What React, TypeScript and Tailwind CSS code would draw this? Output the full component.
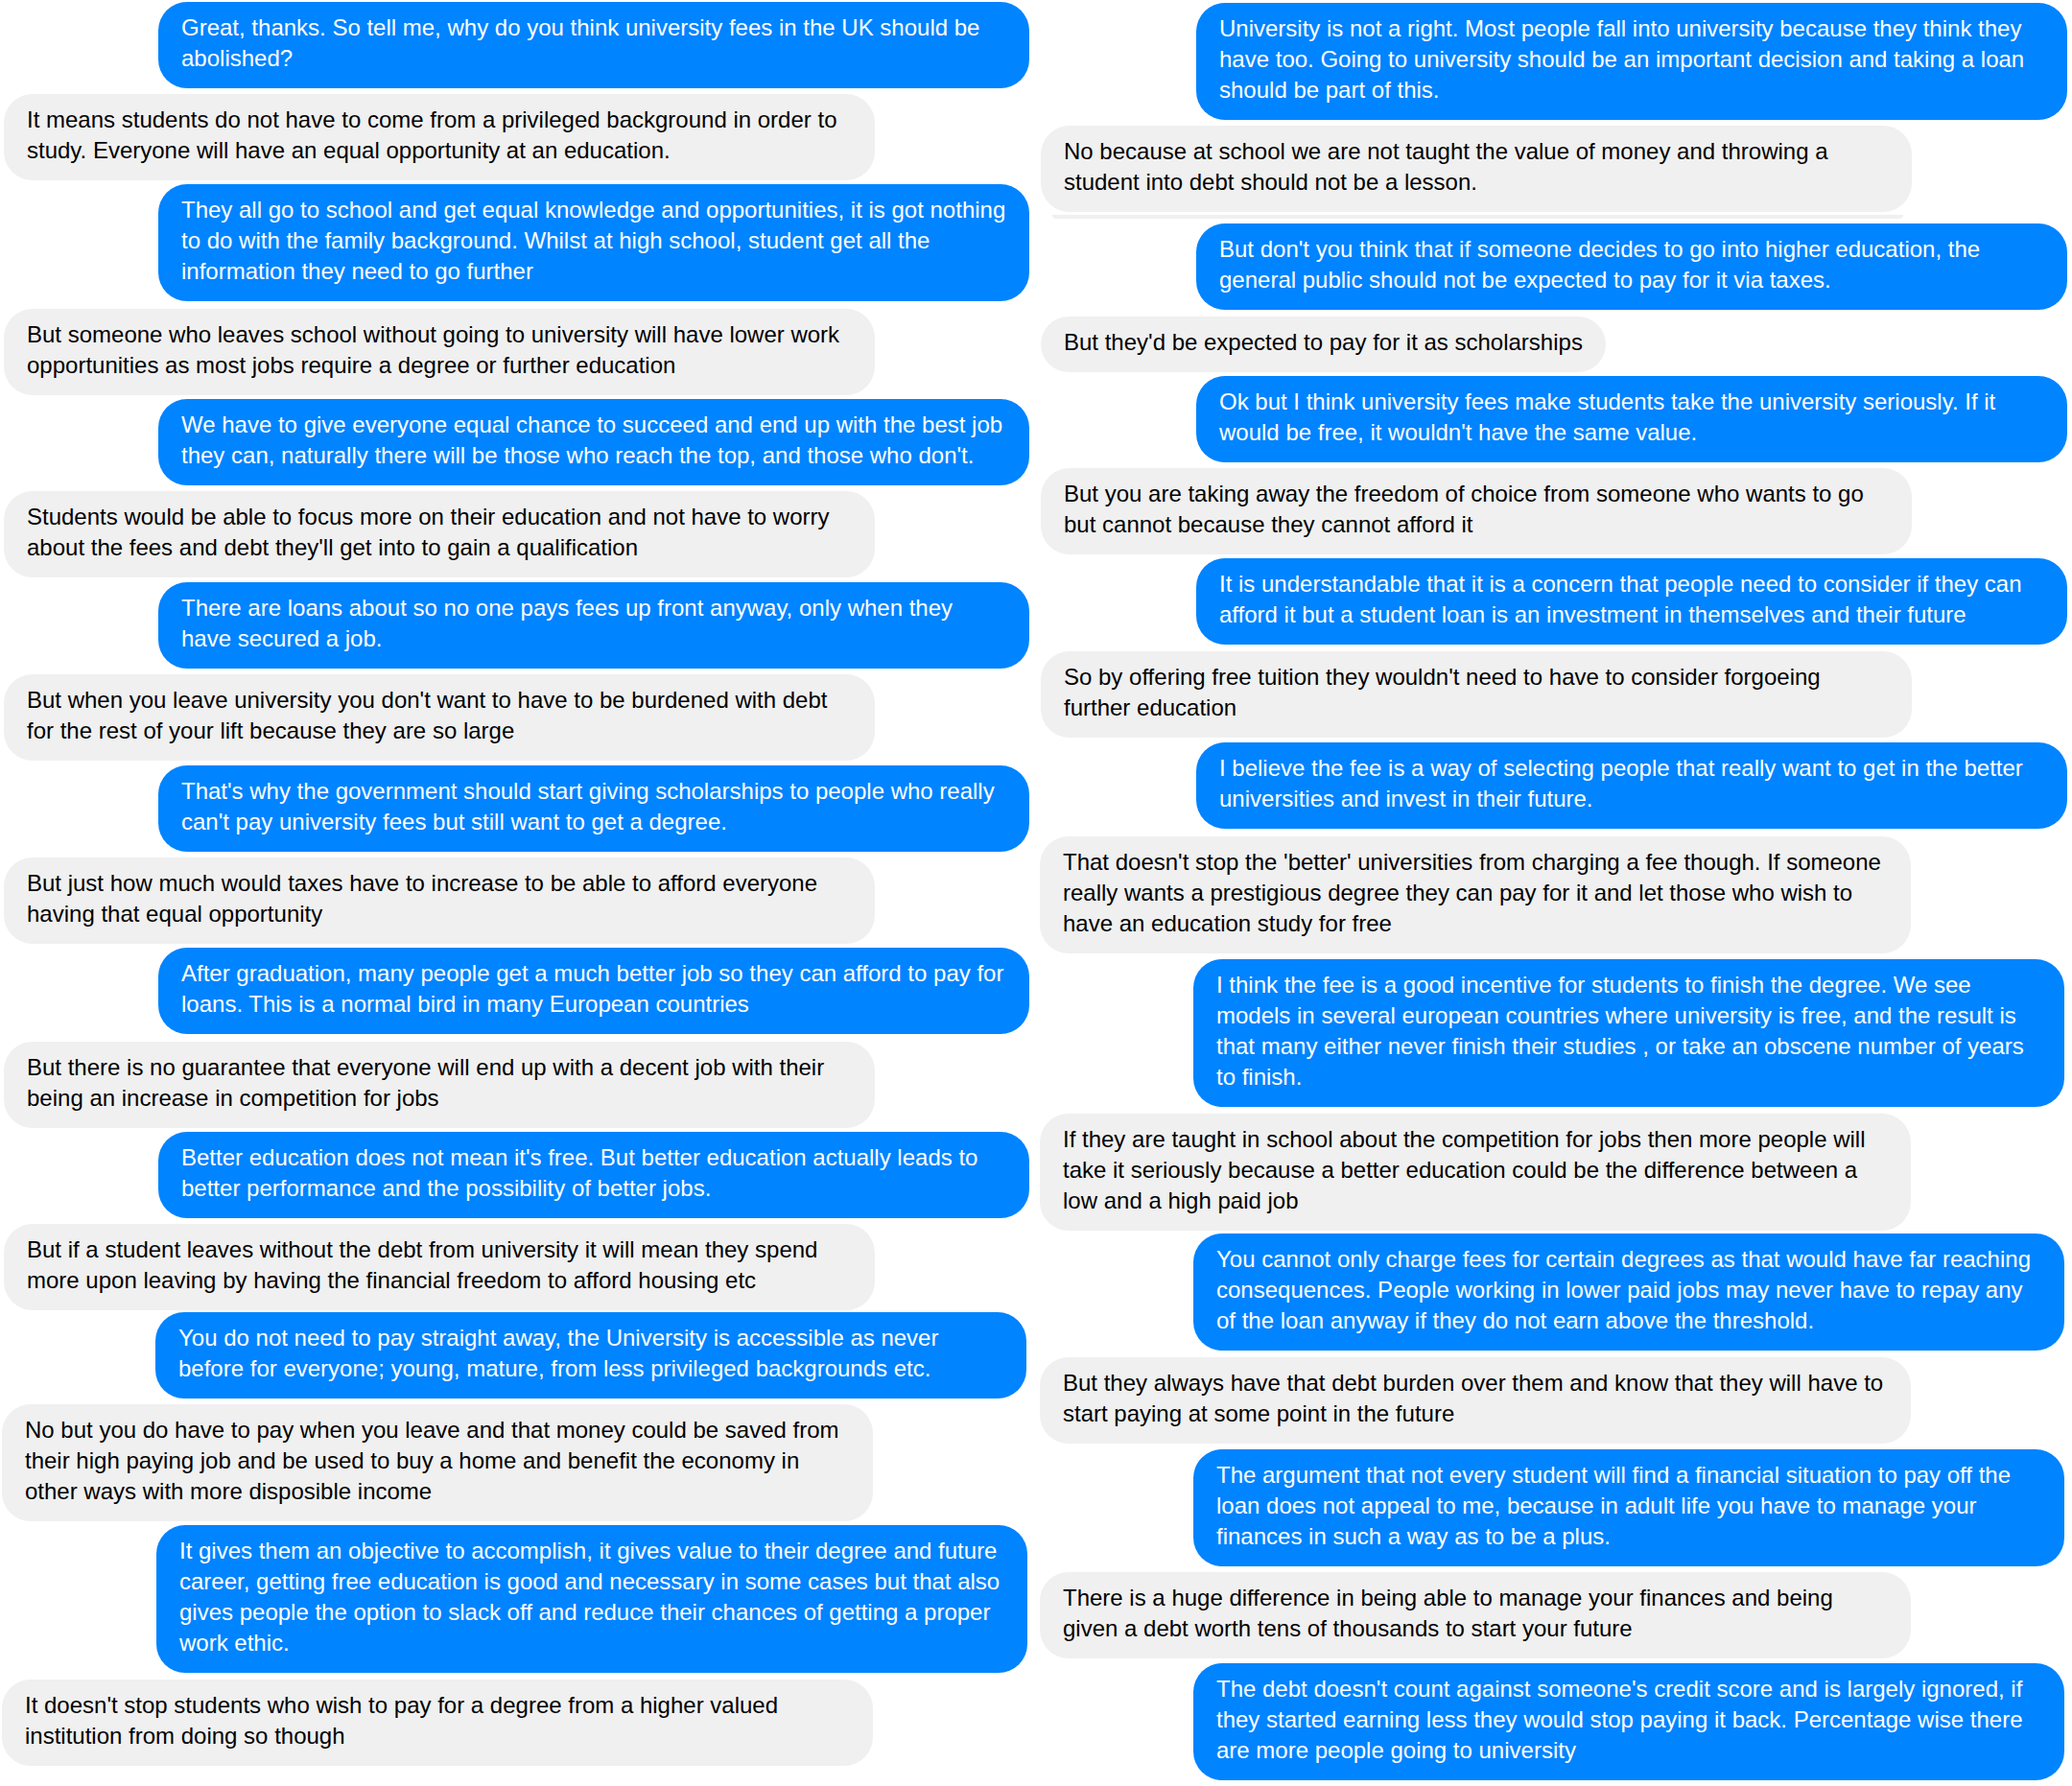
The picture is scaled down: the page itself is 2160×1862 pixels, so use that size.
import React from "react";

type Msg = { me: boolean; mt: string; lines: string[]; nudge?: string };

const leftThread: Msg[] = [
  { me: true, mt: "mt-[2px]", lines: ["Great, thanks. So tell me, why do you think university fees in the UK should be", "abolished?"] },
  { me: false, mt: "mt-[6px]", lines: ["It means students do not have to come from a privileged background in order to", "study. Everyone will have an equal opportunity at an education."] },
  { me: true, mt: "mt-[4px]", lines: ["They all go to school and get equal knowledge and opportunities, it is got nothing", "to do with the family background. Whilst at high school, student get all the", "information they need to go further"] },
  { me: false, mt: "mt-[8px]", lines: ["But someone who leaves school without going to university will have lower work", "opportunities as most jobs require a degree or further education"] },
  { me: true, mt: "mt-[4px]", lines: ["We have to give everyone equal chance to succeed and end up with the best job", "they can, naturally there will be those who reach the top, and those who don't."] },
  { me: false, mt: "mt-[6px]", lines: ["Students would be able to focus more on their education and not have to worry", "about the fees and debt they'll get into to gain a qualification"] },
  { me: true, mt: "mt-[5px]", lines: ["There are loans about so no one pays fees up front anyway, only when they", "have secured a job."] },
  { me: false, mt: "mt-[6px]", lines: ["But when you leave university you don't want to have to be burdened with debt", "for the rest of your lift because they are so large"] },
  { me: true, mt: "mt-[5px]", lines: ["That's why the government should start giving scholarships to people who really", "can't pay university fees but still want to get a degree."] },
  { me: false, mt: "mt-[6px]", lines: ["But just how much would taxes have to increase to be able to afford everyone", "having that equal opportunity"] },
  { me: true, mt: "mt-[4px]", lines: ["After graduation, many people get a much better job so they can afford to pay for", "loans. This is a normal bird in many European countries"] },
  { me: false, mt: "mt-[8px]", lines: ["But there is no guarantee that everyone will end up with a decent job with their", "being an increase in competition for jobs"] },
  { me: true, mt: "mt-[4px]", lines: ["Better education does not mean it's free. But better education actually leads to", "better performance and the possibility of better jobs."] },
  { me: false, mt: "mt-[6px]", lines: ["But if a student leaves without the debt from university it will mean they spend", "more upon leaving by having the financial freedom to afford housing etc"] },
  { me: true, mt: "mt-[2px]", nudge: "mr-[3px]", lines: ["You do not need to pay straight away, the University is accessible as never", "before for everyone; young, mature, from less privileged backgrounds etc."] },
  { me: false, mt: "mt-[6px]", nudge: "-ml-[2px]", lines: ["No but you do have to pay when you leave and that money could be saved from", "their high paying job and be used to buy a home and benefit the economy in", "other ways with more disposible income"] },
  { me: true, mt: "mt-[4px]", nudge: "mr-[2px]", lines: ["It gives them an objective to accomplish, it gives value to their degree and future", "career, getting free education is good and necessary in some cases but that also", "gives people the option to slack off and reduce their chances of getting a proper", "work ethic."] },
  { me: false, mt: "mt-[7px]", nudge: "-ml-[2px]", lines: ["It doesn't stop students who wish to pay for a degree from a higher valued", "institution from doing so though"] },
];

const rightTop: Msg[] = [
  { me: true, mt: "mt-[3px]", lines: ["University is not a right. Most people fall into university because they think they", "have too. Going to university should be an important decision and taking a loan", "should be part of this."] },
  { me: false, mt: "mt-[6px]", lines: ["No because at school we are not taught the value of money and throwing a", "student into debt should not be a lesson."] },
];

const rightRest: Msg[] = [
  { me: true, mt: "mt-[5px]", lines: ["But don't you think that if someone decides to go into higher education, the", "general public should not be expected to pay for it via taxes."] },
  { me: false, mt: "mt-[7px]", lines: ["But they'd be expected to pay for it as scholarships"] },
  { me: true, mt: "mt-[4px]", lines: ["Ok but I think university fees make students take the university seriously. If it", "would be free, it wouldn't have the same value."] },
  { me: false, mt: "mt-[6px]", lines: ["But you are taking away the freedom of choice from someone who wants to go", "but cannot because they cannot afford it"] },
  { me: true, mt: "mt-[4px]", lines: ["It is understandable that it is a concern that people need to consider if they can", "afford it but a student loan is an investment in themselves and their future"] },
  { me: false, mt: "mt-[7px]", lines: ["So by offering free tuition they wouldn't need to have to consider forgoeing", "further education"] },
  { me: true, mt: "mt-[5px]", lines: ["I believe the fee is a way of selecting people that really want to get in the better", "universities and invest in their future."] },
  { me: false, mt: "mt-[8px]", nudge: "-ml-[1px]", lines: ["That doesn't stop the 'better' universities from charging a fee though. If someone", "really wants a prestigious degree they can pay for it and let those who wish to", "have an education study for free"] },
  { me: true, mt: "mt-[6px]", nudge: "mr-[3px]", lines: ["I think the fee is a good incentive for students to finish the degree. We see", "models in several european countries where university is free, and the result is", "that many either never finish their studies , or take an obscene number of years", "to finish."] },
  { me: false, mt: "mt-[7px]", nudge: "-ml-[1px]", lines: ["If they are taught in school about the competition for jobs then more people will", "take it seriously because a better education could be the difference between a", "low and a high paid job"] },
  { me: true, mt: "mt-[3px]", nudge: "mr-[3px]", lines: ["You cannot only charge fees for certain degrees as that would have far reaching", "consequences. People working in lower paid jobs may never have to repay any", "of the loan anyway if they do not earn above the threshold."] },
  { me: false, mt: "mt-[7px]", nudge: "-ml-[1px]", lines: ["But they always have that debt burden over them and know that they will have to", "start paying at some point in the future"] },
  { me: true, mt: "mt-[6px]", nudge: "mr-[3px]", lines: ["The argument that not every student will find a financial situation to pay off the", "loan does not appeal to me, because in adult life you have to manage your", "finances in such a way as to be a plus."] },
  { me: false, mt: "mt-[6px]", nudge: "-ml-[1px]", lines: ["There is a huge difference in being able to manage your finances and being", "given a debt worth tens of thousands to start your future"] },
  { me: true, mt: "mt-[5px]", nudge: "mr-[3px]", lines: ["The debt doesn't count against someone's credit score and is largely ignored, if", "they started earning less they would stop paying it back. Percentage wise there", "are more people going to university"] },
];

const Bubble = ({ msg }: { msg: Msg }) => (
  <div
    className={`${msg.mt} ${msg.nudge ?? ""} ${msg.lines.length > 1 ? "w-[908px]" : "w-fit"} ${
      msg.me ? "self-end bg-[#0084ff] text-white" : "self-start bg-[#f0f0f0] text-black"
    } rounded-[30px] px-6 pt-[11px] pb-[15px] text-[24px] leading-[32px]`}
  >
    {msg.lines.map((line, i) => (
      <div key={i} className="whitespace-nowrap">
        {line}
      </div>
    ))}
  </div>
);

const App = () => {
  return (
    <div className="flex h-[1862px] w-[2160px] gap-[12px] bg-white pl-[4px] font-['Liberation_Sans',Arial,sans-serif]">
      {/* left thread */}
      <div className="flex w-[1069px] flex-col">
        {leftThread.map((m, i) => (
          <Bubble key={i} msg={m} />
        ))}
      </div>

      {/* right thread */}
      <div className="flex w-[1070px] flex-col">
        {rightTop.map((m, i) => (
          <Bubble key={i} msg={m} />
        ))}
        {/* sliver of a cut-off bubble */}
        <div className="mt-[3px] ml-[12px] h-[4px] w-[887px] rounded-b-full bg-[#f0f0f0]" />
        {rightRest.map((m, i) => (
          <Bubble key={i} msg={m} />
        ))}
      </div>
    </div>
  );
};

export default App;
